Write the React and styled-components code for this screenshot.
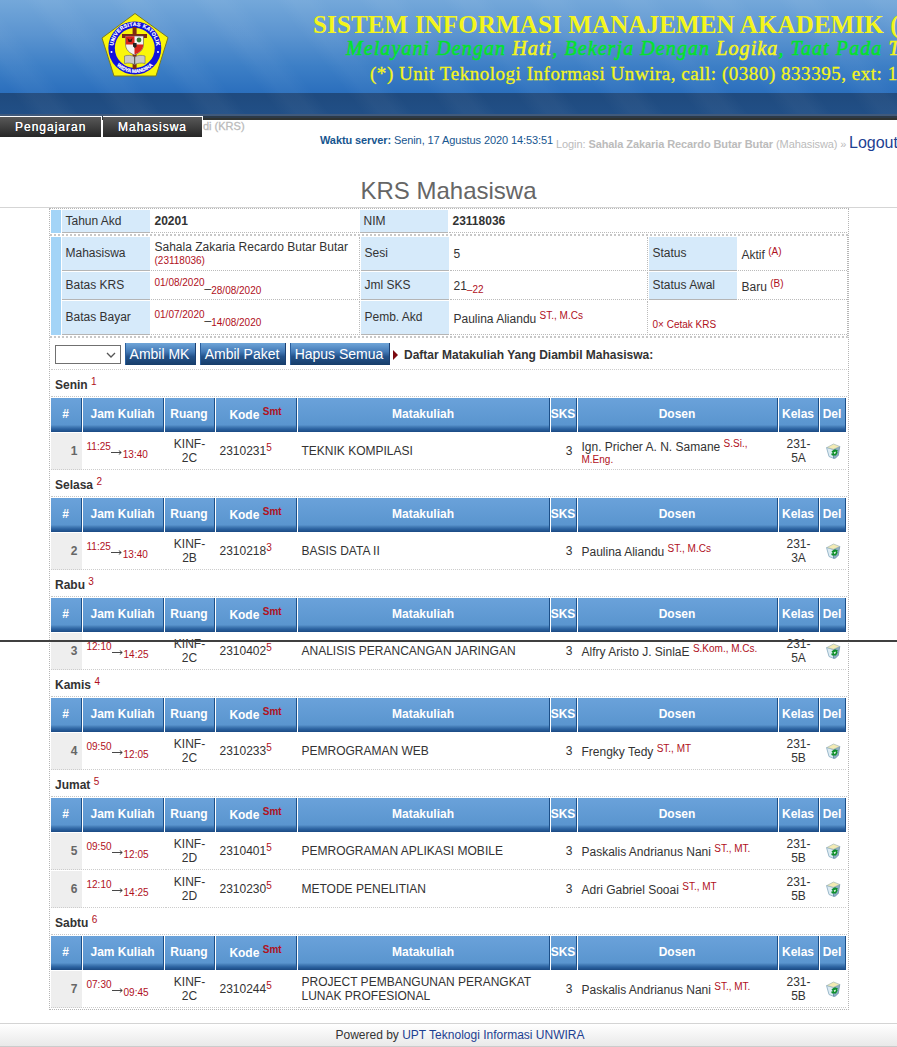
import React from "react";
import styled, { createGlobalStyle } from "styled-components";

const GlobalStyle = createGlobalStyle`
  * { box-sizing: border-box; }
  body {
    margin: 0;
    background: #fff;
    color: #333;
    font: 12px/14px "Liberation Sans", Arial, sans-serif;
    overflow: hidden;
  }
`;

const Page = styled.div`
  position: relative;
  width: 897px;
  height: 1047px;
  overflow: hidden;
`;

/* ---------- banner ---------- */

const Banner = styled.header`
  display: flex;
  height: 120px;
  padding-left: 100px;
  background:
    linear-gradient(#405a7c 0 2px, #2c3a48 2px 4px, #2f3331 4px) 0 114px / 100% 6px no-repeat,
    repeating-linear-gradient(52deg, rgba(255, 255, 255, 0) 0 26px, rgba(255, 255, 255, 0.035) 40px 52px, rgba(255, 255, 255, 0) 66px),
    linear-gradient(#1f4a7e, #214f86) 0 93px / 100% 21px no-repeat,
    linear-gradient(#74a8da 0, #5b94d0 35px, #3d7fc6 66px, #2b6fbd 93px);
`;

const Crest = styled.svg`
  flex: none;
  width: 70px;
  height: 68px;
  margin-top: 11px;
`;

const BannerText = styled.div`
  flex: none;
  width: 800px;
  margin-left: 143px;
  white-space: nowrap;
  color: #f4f51c;
  font-family: "Liberation Serif", "Times New Roman", serif;
`;

const BannerTitle = styled.div`
  margin-top: 10px;
  font-size: 25px;
  line-height: 30px;
  font-weight: bold;
  letter-spacing: 0.14px;
`;

const BannerMotto = styled.div`
  margin: -3px 0 0 33px;
  font-size: 20px;
  line-height: 22px;
  font-style: italic;
  letter-spacing: 1.09px;
  color: #06e12e;
  -webkit-text-stroke: 0.6px;
  em { color: #f4f51c; }
`;

const BannerContact = styled.div`
  margin: 4px 0 0 57px;
  font-size: 19px;
  line-height: 22px;
  letter-spacing: 0.53px;
  -webkit-text-stroke: 0.3px;
`;

/* ---------- menu and session bar ---------- */

const Menu = styled.nav`
  position: relative;
  display: flex;
  gap: 2px;
  height: 21px;
  margin-top: -4px;
`;

const MenuItem = styled.a`
  flex: none;
  width: ${(p) => p.$width}px;
  height: 21px;
  padding-left: 15px;
  border-top: 1px solid #fff;
  box-shadow: 1px 0 #fff;
  background: linear-gradient(#585858, #262626);
  color: #fff;
  line-height: 20px;
  letter-spacing: 1px;
  text-shadow: 0 0 0.6px #fff;
`;

const Crumb = styled.span`
  padding-top: 3px;
  margin-left: -1px;
  font-size: 11px;
  color: #bbb;
  -webkit-text-stroke: 0.3px;
`;

const Session = styled.div`
  display: flex;
  height: 36px;
  padding-left: 320px;
  white-space: nowrap;
  font-size: 11px;
`;

const Clock = styled.span`
  flex: none;
  width: 236px;
  line-height: 7px;
  letter-spacing: -0.1px;
  color: #17568f;
`;

const Login = styled.span`
  flex: none;
  width: 293px;
  line-height: 15px;
  letter-spacing: -0.09px;
  color: #bbb;
`;

const Logout = styled.a`
  color: #1d3f92;
  font-size: 16px;
  line-height: 12px;
`;

const Title = styled.h1`
  height: 35px;
  margin: 0;
  border-bottom: 1px solid #d5d5d5;
  text-align: center;
  font-size: 24px;
  line-height: 35px;
  font-weight: normal;
  color: #666;
`;

/* ---------- main panel ---------- */

const Panel = styled.main`
  width: 800px;
  height: 802px;
  margin-left: 49px;
  border: 1px dotted #b5b5b5;
  padding: 1px 1px 0;
`;

const InfoTop = styled.div`
  display: grid;
  grid-template-columns: 10px 88px 208px 88px 1fr;
  column-gap: 1px;
  height: 23px;
`;

const InfoMain = styled.div`
  display: grid;
  grid-template-columns: 10px 88px 209px 88px 198px 88px 109px;
  grid-template-rows: 34px 28px 34px;
  gap: 1px;
  margin: 1px 0 0 -1px;
  width: 798px;
  padding: 1px 0 1px 1px;
  border-top: 2px dotted #c8c8c8;
  border-bottom: 2px dotted #c8c8c8;
  border-right: 1px dotted #b5b5b5;
`;

const Accent = styled.div`
  grid-row: 1 / -1;
  background: #a3d4f7;
`;

const Label = styled.div`
  display: flex;
  align-items: center;
  padding: 0 0 1px 3.5px;
  background: #d6eafa;
  border-bottom: 1px solid #b5b5b5;
`;

const Value = styled.div`
  display: flex;
  align-items: center;
  grid-column: span ${(p) => p.$span || 1};
  padding: ${(p) => p.$drop || 0}px 0 0 3.5px;
  border-bottom: 1px dotted #bbb;
  border-right: ${(p) => (p.$edge ? "1px dotted #bbb" : "0")};
  white-space: nowrap;
  font-weight: ${(p) => (p.$strong ? "bold" : "normal")};
`;

const Small = styled.span`
  font-size: ${(p) => p.$size || 10}px;
  line-height: 0;
  vertical-align: ${(p) => p.$shift || 0}px;
  color: #b0101c;
`;

const Dash = styled.span`
  line-height: 0;
  vertical-align: ${(p) => p.$shift || 0}px;
`;

const Arrow = styled.svg`
  width: 11px;
  height: 5px;
  margin: 0 0.5px;
  vertical-align: 0;
`;

const Toolbar = styled.div`
  display: flex;
  align-items: flex-start;
  height: 32px;
  padding: 5px 0 0 4px;
  border-bottom: 1px dotted #ccc;
`;

const Picker = styled.div`
  display: flex;
  align-items: center;
  justify-content: flex-end;
  width: 66px;
  height: 19px;
  margin: 2px 4px 0 0;
  padding-right: 4px;
  border: 1px solid #707070;
`;

const Action = styled.button`
  flex: none;
  width: ${(p) => p.$width}px;
  height: 22px;
  margin-right: ${(p) => p.$after}px;
  padding: 0 2px 1px 0;
  border: 0;
  border-left: 1px solid #2b5f9d;
  border-right: 1px solid #1b3f70;
  background: linear-gradient(#6fa5d8 0, #4379b6 40%, #24528a 62%, #173d69 100%);
  color: #fff;
  font: 14px/20px "Liberation Sans", Arial, sans-serif;
  white-space: nowrap;
`;

const Pointer = styled.i`
  margin: 7px 6px 0 3px;
  border-left: 5px solid #7c0a10;
  border-top: 5px solid transparent;
  border-bottom: 5px solid transparent;
`;

const ToolbarText = styled.b`
  padding-top: 5px;
`;

/* ---------- schedule ---------- */

const Day = styled.div`
  height: 27px;
  padding: 8px 0 0 4px;
  border-bottom: 1px dotted #c8c8c8;
  font-weight: bold;
  ${Small} { font-weight: normal; }
`;

const Row = styled.div`
  display: grid;
  grid-template-columns: 31px 81px 50px 81px 252px 26px 200px 40px 26px;
  column-gap: 1px;
  height: ${(p) => (p.$head ? 34 : 37)}px;
  margin-top: 1px;
`;

const Head = styled.div`
  display: flex;
  align-items: center;
  justify-content: center;
  padding: 0 1px ${(p) => (p.$low ? 0 : 3)}px 0;
  border-right: 1px solid #1c4f88;
  background: linear-gradient(#6aa2da 0, #5a95cf 27px, #4c85bf 28px, #2b62a0 31px, #1b4a83 34px);
  color: #fff;
  font-weight: bold;
  white-space: nowrap;
`;

const Cell = styled.div`
  display: flex;
  align-items: center;
  justify-content: ${(p) => p.$align || "flex-start"};
  text-align: ${(p) => (p.$align === "center" ? "center" : "left")};
  padding: ${(p) => p.$drop || 0}px 4.5px 0 3.5px;
  border-bottom: 1px dotted #ccc;
`;

const Num = styled(Cell)`
  background: #eee;
  color: #666;
  font-weight: bold;
`;

const Degree = styled(Small)`
  display: ${(p) => (p.$block ? "block" : "inline")};
  line-height: ${(p) => (p.$block ? "12px" : "0")};
`;

const Rule = styled.div`
  position: absolute;
  left: 0;
  right: 0;
  top: 640px;
  height: 2px;
  background: #404040;
`;

const Footer = styled.footer`
  height: 24px;
  margin-top: 13px;
  padding-left: 23px;
  border-top: 1px solid #d4d4d4;
  border-bottom: 1px solid #ccc;
  background: linear-gradient(#fff, #e9e9e9);
  text-align: center;
  line-height: 22px;
  a { color: #1d3f92; }
`;

const Logo = () => (
  <Crest viewBox="100 11 70 68">
    <path d="M135 13.5 168 37.5 156 76H114L102 38z" fill="#faf60a" stroke="#7a7a20" strokeWidth="1" />
    <circle cx="134.8" cy="48" r="23.2" fill="#faf60a" stroke="#1212dc" strokeWidth="6.500" />
    <path d="M132.6 27h4v42h-4zM122 34h25v4h-25z" fill="#7d2a14" />
    <path d="M125.5 36h18v8c0 6-4 9-9 11-5-2-9-5-9-11z" fill="#f3f3f3" stroke="#555" strokeWidth=".6" />
    <path d="M125.8 36.2h8.700v8.300h-8.700zM134.5 44.5h8.800c0 5-4 8.500-8.800 10z" fill="#d7261d" />
    <path d="M127.500 38l2.500 2 2.500-2-1 4h-3z" fill="#3a1a12" />
    <circle cx="139" cy="40" r="2.400" fill="#2f7a35" />
    <path d="M133 43h3.600v3.500l-1.800 1.500-1.800-1.500z" fill="#222" />
    <path d="M124.500 56c3.500-1 7-1 10.200 1 3.500-2 7-2 10.300-1v7.500c-3.500-.8-7-.5-10.300 1-3.200-1.500-6.700-1.800-10.200-1z" fill="#c9c9c9" stroke="#666" strokeWidth=".6" />
    <path d="M134.700 57v7" stroke="#444" />
    <path id="crest-top" d="M113.800 52a21.500 21.500 0 1 1 42 0" fill="none" />
    <path id="crest-low" d="M112.300 59a25.100 25.100 0 0 0 45 0" fill="none" />
    <g fill="#fff" stroke="#fff" strokeWidth=".2" fontFamily="Liberation Sans" fontWeight="bold" textAnchor="middle">
      <text fontSize="5.200"><textPath href="#crest-top" startOffset="50%" textLength="64">UNIVERSITAS KATOLIK</textPath></text>
      <text fontSize="5"><textPath href="#crest-low" startOffset="50%" textLength="40">WIDYA MANDIRA</textPath></text>
    </g>
    <circle cx="111.500" cy="52" r="1" fill="#fff" />
    <circle cx="158" cy="52" r="1" fill="#fff" />
  </Crest>
);

const Bin = () => (
  <svg width="16" height="16" viewBox="0 0 16 16">
    <path d="M1.500 4.500 4 13.500l4.500 1.800V6.500z" fill="#dcebf3" stroke="#86aabf" strokeWidth=".8" />
    <path d="M8.500 6.500v8.800h1.800l3-3 1.500-9z" fill="#8fb0c5" stroke="#5f86a0" strokeWidth=".7" />
    <path d="M2 4.500 8.500 1l6.300 2.500L8.500 6.300z" fill="#f3ebb4" stroke="#a3b8b4" strokeWidth=".7" />
    <path d="M6.500 8.200 10 6.200l3 1.300-1 1.200.7.800-1.700 3H7l-1-1.800 1.800-.5z" fill="#0f8f2c" />
    <path d="m8.600 9.500 1.900-1 .4 1.500-1.500.9z" fill="#e4f5e6" />
  </svg>
);

const schedule = [
  ["Senin", [["11:25", "13:40", "KINF-2C", "2310231", 5, "TEKNIK KOMPILASI", "Ign. Pricher A. N. Samane", ["S.Si.,", "M.Eng."], "231-5A"]]],
  ["Selasa", [["11:25", "13:40", "KINF-2B", "2310218", 3, "BASIS DATA II", "Paulina Aliandu", ["ST., M.Cs"], "231-3A"]]],
  ["Rabu", [["12:10", "14:25", "KINF-2C", "2310402", 5, "ANALISIS PERANCANGAN JARINGAN", "Alfry Aristo J. SinlaE", ["S.Kom., M.Cs."], "231-5A"]]],
  ["Kamis", [["09:50", "12:05", "KINF-2C", "2310233", 5, "PEMROGRAMAN WEB", "Frengky Tedy", ["ST., MT"], "231-5B"]]],
  ["Jumat", [
    ["09:50", "12:05", "KINF-2D", "2310401", 5, "PEMROGRAMAN APLIKASI MOBILE", "Paskalis Andrianus Nani", ["ST., MT."], "231-5B"],
    ["12:10", "14:25", "KINF-2D", "2310230", 5, "METODE PENELITIAN", "Adri Gabriel Sooai", ["ST., MT"], "231-5B"],
  ]],
  ["Sabtu", [["07:30", "09:45", "KINF-2C", "2310244", 5, "PROJECT PEMBANGUNAN PERANGKAT LUNAK PROFESIONAL", "Paskalis Andrianus Nani", ["ST., MT."], "231-5B"]]],
];

const HeadRow = () => (
  <Row $head>
    <Head>#</Head>
    <Head>Jam Kuliah</Head>
    <Head>Ruang</Head>
    <Head $low><span>Kode <Small $shift={4}>Smt</Small></span></Head>
    <Head>Matakuliah</Head>
    <Head>SKS</Head>
    <Head>Dosen</Head>
    <Head>Kelas</Head>
    <Head>Del</Head>
  </Row>
);

const Course = ({ no, data }) => {
  const [from, to, room, code, term, name, teacher, [degree, more], group] = data;
  return (
    <Row>
      <Num $align="flex-end">{no}</Num>
      <Cell>
        <span>
          <Small $shift={5}>{from}</Small>
          <Arrow viewBox="0 0 11 5"><path d="M0 2.500h10M7.800.5l2.500 2-2.500 2" fill="none" stroke="#333" strokeWidth=".9" /></Arrow>
          <Small $shift={-3}>{to}</Small>
        </span>
      </Cell>
      <Cell $align="center">{room}</Cell>
      <Cell><span>{code}<Small $shift={4}>{term}</Small></span></Cell>
      <Cell>{name}</Cell>
      <Cell $align="flex-end">3</Cell>
      <Cell $drop={more ? 3 : 1}>
        <span>{teacher} <Degree $shift={4}>{degree}</Degree>{more && <Degree $block>{more}</Degree>}</span>
      </Cell>
      <Cell $align="center">{group}</Cell>
      <Cell $align="center"><Bin /></Cell>
    </Row>
  );
};

const Range = ({ from, to }) => (
  <span><Small $shift={4}>{from}</Small><Dash $shift={3}>_</Dash><Small $shift={-4}>{to}</Small></span>
);

export default function App() {
  let no = 0;
  return (
    <Page>
      <GlobalStyle />
      <Banner>
        <Logo />
        <BannerText>
          <BannerTitle>SISTEM INFORMASI MANAJEMEN AKADEMIK (</BannerTitle>
          <BannerMotto>Melayani Dengan <em>Hati</em>, Bekerja Dengan <em>Logika</em>, Taat Pada <em>T</em></BannerMotto>
          <BannerContact>(*) Unit Teknologi Informasi Unwira, call: (0380) 833395, ext: 1</BannerContact>
        </BannerText>
      </Banner>
      <Menu>
        <MenuItem $width={101}>Pengajaran</MenuItem>
        <MenuItem $width={99}>Mahasiswa</MenuItem>
        <Crumb>di (KRS)</Crumb>
      </Menu>
      <Session>
        <Clock><b>Waktu server:</b> Senin, 17 Agustus 2020 14:53:51</Clock>
        <Login>Login: <b>Sahala Zakaria Recardo Butar Butar</b> (Mahasiswa) »</Login>
        <Logout>Logout</Logout>
      </Session>
      <Title>KRS Mahasiswa</Title>
      <Panel>
        <InfoTop>
          <Accent />
          <Label>Tahun Akd</Label>
          <Value $strong>20201</Value>
          <Label>NIM</Label>
          <Value $strong>23118036</Value>
        </InfoTop>
        <InfoMain>
          <Accent />
          <Label>Mahasiswa</Label>
          <Value $edge><span>Sahala Zakaria Recardo Butar Butar<br /><Small $shift={1}>(23118036)</Small></span></Value>
          <Label>Sesi</Label>
          <Value $edge>5</Value>
          <Label>Status</Label>
          <Value $drop={2}><span>Aktif <Small $shift={4}>(A)</Small></span></Value>
          <Label>Batas KRS</Label>
          <Value $edge><Range from="01/08/2020" to="28/08/2020" /></Value>
          <Label>Jml SKS</Label>
          <Value $edge><span>21<Small $shift={-3}>–22</Small></span></Value>
          <Label>Status Awal</Label>
          <Value $drop={2}><span>Baru <Small $shift={4}>(B)</Small></span></Value>
          <Label>Batas Bayar</Label>
          <Value $edge><Range from="01/07/2020" to="14/08/2020" /></Value>
          <Label>Pemb. Akd</Label>
          <Value $edge $drop={2}><span>Paulina Aliandu <Small $shift={4}>ST., M.Cs</Small></span></Value>
          <Value $span={2} $drop={14}><Small>0× Cetak KRS</Small></Value>
        </InfoMain>
        <Toolbar>
          <Picker>
            <svg width="10" height="6" viewBox="0 0 10 6"><path d="m1 1 4 4 4-4" fill="none" stroke="#555" strokeWidth="1.300" /></svg>
          </Picker>
          <Action $width={71} $after={4}>Ambil MK</Action>
          <Action $width={86} $after={4}>Ambil Paket</Action>
          <Action $width={100} $after={0}>Hapus Semua</Action>
          <Pointer />
          <ToolbarText>Daftar Matakuliah Yang Diambil Mahasiswa:</ToolbarText>
        </Toolbar>
        {schedule.map(([day, rows], i) => (
          <section key={day}>
            <Day>{day} <Small $shift={4}>{i + 1}</Small></Day>
            <HeadRow />
            {rows.map((data) => <Course key={data[3]} no={++no} data={data} />)}
          </section>
        ))}
      </Panel>
      <Footer>Powered by <a>UPT Teknologi Informasi UNWIRA</a></Footer>
      <Rule />
    </Page>
  );
}
